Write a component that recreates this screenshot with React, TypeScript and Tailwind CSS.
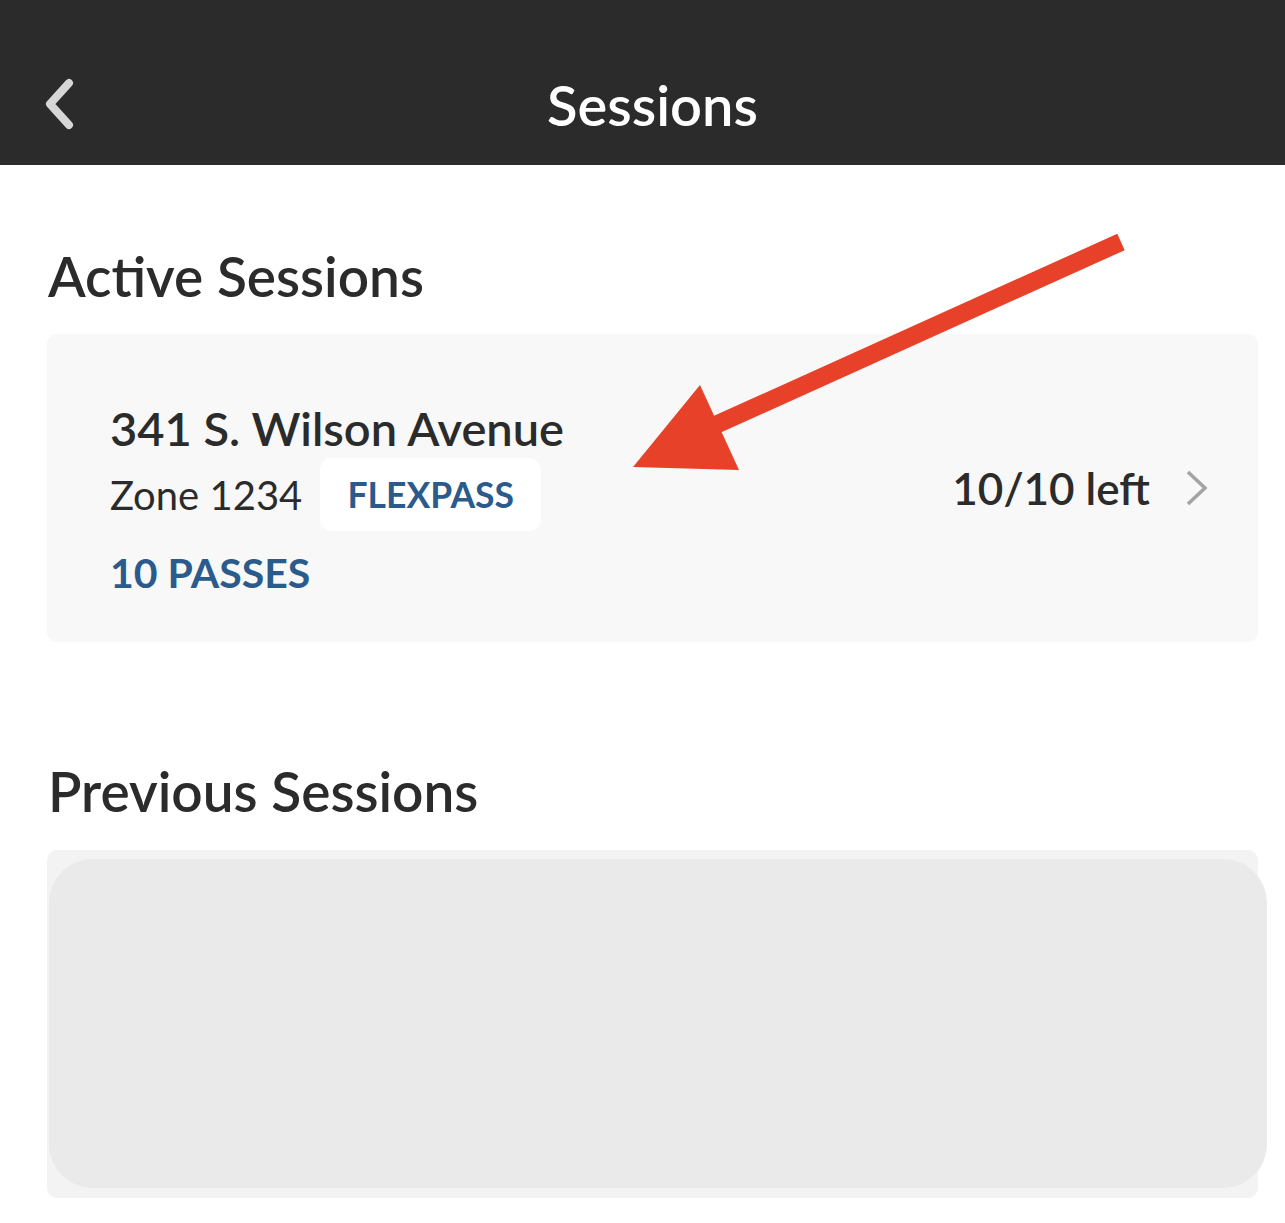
import React from "react";

const font = { fontFamily: "Lato, 'Open Sans', sans-serif" };

const BackIcon = () => (
  <svg width="34" height="52" viewBox="0 0 34 52" fill="none">
    <path
      d="M27 5 L8 26 L27 47"
      stroke="#d6d6d6"
      strokeWidth="8"
      strokeLinecap="round"
      strokeLinejoin="round"
    />
  </svg>
);

const Chevron = () => (
  <svg width="22" height="36" viewBox="0 0 22 36" fill="none">
    <path d="M2 2 L19 18 L2 34" stroke="#a3a3a3" strokeWidth="3.5" />
  </svg>
);

// red annotation arrow drawn over the card
const Arrow = () => (
  <svg
    className="absolute left-0 top-0 pointer-events-none"
    width="1285"
    height="500"
    viewBox="0 0 1285 500"
  >
    <line x1="1121" y1="242" x2="700" y2="432" stroke="#e8412a" strokeWidth="18" />
    <polygon points="700,385 633,467 739,470" fill="#e8412a" />
  </svg>
);

export default function App() {
  return (
    <div
      className="relative w-[1285px] h-[1223px] bg-white text-[#2b2b2b]"
      style={font}
    >
      <header className="relative h-[165px] bg-[#2b2b2b] flex items-center justify-center">
        <span className="absolute left-[42px] top-[78px]">
          <BackIcon />
        </span>
        <h1 className="pt-[44px] pl-[20px] text-[56px] leading-[64px] font-semibold text-white">
          Sessions
        </h1>
      </header>

      <main className="pl-[47px] pr-[27px]">
        <h2 className="mt-[79px] pl-[1px] text-[55px] leading-[64px] font-semibold">
          Active Sessions
        </h2>
        <section className="mt-[26px] h-[308px] rounded-[10px] bg-[#f8f8f8] pl-[63px] pr-[50px] flex items-center">
          <div className="flex-1 pt-[22px]">
            <div className="text-[47px] leading-[56px] font-semibold">
              341 S. Wilson Avenue
            </div>
            <div className="mt-[2px] flex items-center">
              <span className="text-[40px] leading-[50px]">Zone 1234</span>
              <span className="ml-[18px] h-[73px] w-[221px] rounded-[12px] bg-white flex items-center justify-center text-[35.5px] font-bold text-[#2b5b8c]">
                FLEXPASS
              </span>
            </div>
            <div className="mt-[17px] text-[41px] leading-[50px] font-bold text-[#2b5b8c]">
              10 PASSES
            </div>
          </div>
          <div className="flex items-center gap-[36px]">
            <span className="text-[44px] leading-[56px] font-semibold">10/10 left</span>
            <Chevron />
          </div>
        </section>

        <h2 className="mt-[117px] pl-[1px] text-[55px] leading-[64px] font-semibold">
          Previous Sessions
        </h2>
        <section className="mt-[27px] rounded-[10px] bg-[#f3f3f3] pt-[9px] pb-[10px] pl-[2px]">
          <div className="h-[329px] -mr-[9px] rounded-[44px] bg-[#eaeaea]" />
        </section>
      </main>

      <Arrow />
    </div>
  );
}
